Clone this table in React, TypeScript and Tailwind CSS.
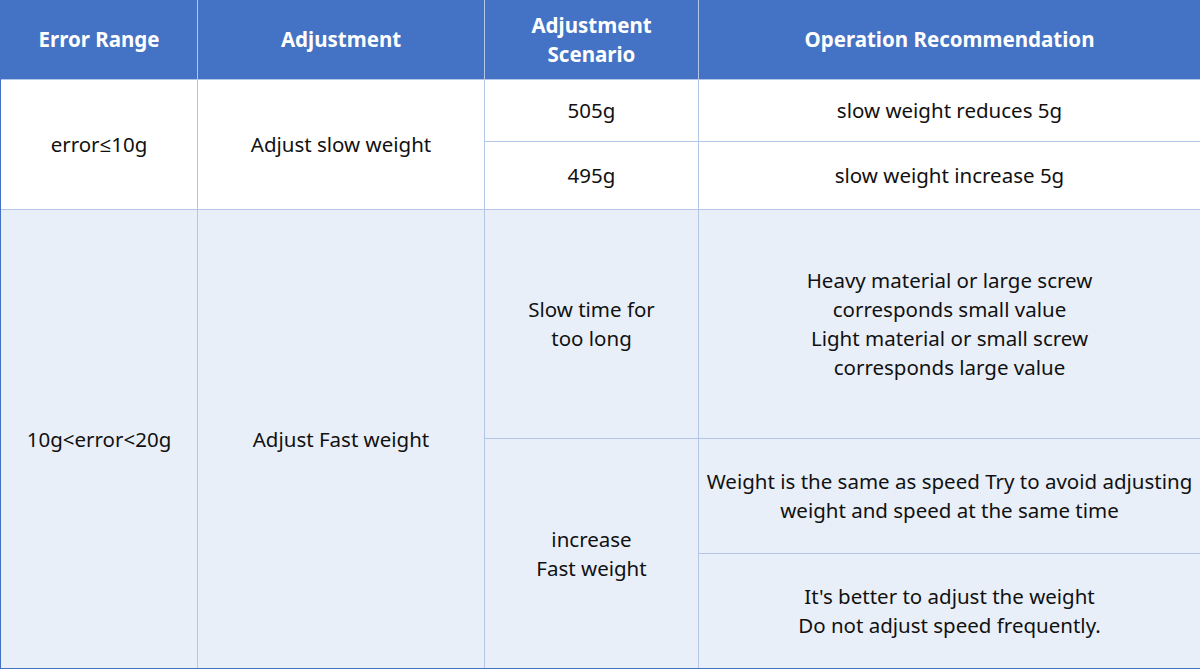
const cell = "flex items-center justify-center text-center"
const body = "bg-[#e9eff8] text-[#111111]"

export default function App() {
  return (
    <div
      className="w-[1200px] h-[669px] border-l border-b border-[#4472c4] bg-[#b4c6e7] grid grid-cols-[196px_286px_213px_1fr] grid-rows-[79px_61px_67px_228px_114px_1fr] gap-px text-[20.5px] leading-[29px] whitespace-nowrap"
      style={{ fontFamily: '"Noto Sans", "Open Sans", sans-serif' }}
    >
      {/* Header */}
      <div className={`${cell} bg-[#4472c4] text-white font-bold`}>Error Range</div>
      <div className={`${cell} bg-[#4472c4] text-white font-bold`}>Adjustment</div>
      <div className={`${cell} bg-[#4472c4] text-white font-bold`}>
        Adjustment
        <br />
        Scenario
      </div>
      <div className={`${cell} bg-[#4472c4] text-white font-bold`}>Operation Recommendation</div>

      {/* Group 1 */}
      <div className={`${cell} bg-white text-[#111111] row-span-2`}>error≤10g</div>
      <div className={`${cell} bg-white text-[#111111] row-span-2`}>Adjust slow weight</div>
      <div className={`${cell} bg-white text-[#111111]`}>505g</div>
      <div className={`${cell} bg-white text-[#111111]`}>slow weight reduces 5g</div>
      <div className={`${cell} bg-white text-[#111111]`}>495g</div>
      <div className={`${cell} bg-white text-[#111111]`}>slow weight increase 5g</div>

      {/* Group 2 */}
      <div className={`${cell} ${body} row-span-3`}>10g&lt;error&lt;20g</div>
      <div className={`${cell} ${body} row-span-3`}>Adjust Fast weight</div>
      <div className={`${cell} ${body}`}>
        Slow time for
        <br />
        too long
      </div>
      <div className={`${cell} ${body}`}>
        Heavy material or large screw
        <br />
        corresponds small value
        <br />
        Light material or small screw
        <br />
        corresponds large value
      </div>
      <div className={`${cell} ${body} row-span-2`}>
        increase
        <br />
        Fast weight
      </div>
      <div className={`${cell} ${body}`}>
        Weight is the same as speed Try to avoid adjusting
        <br />
        weight and speed at the same time
      </div>
      <div className={`${cell} ${body}`}>
        It's better to adjust the weight
        <br />
        Do not adjust speed frequently.
      </div>
    </div>
  )
}
